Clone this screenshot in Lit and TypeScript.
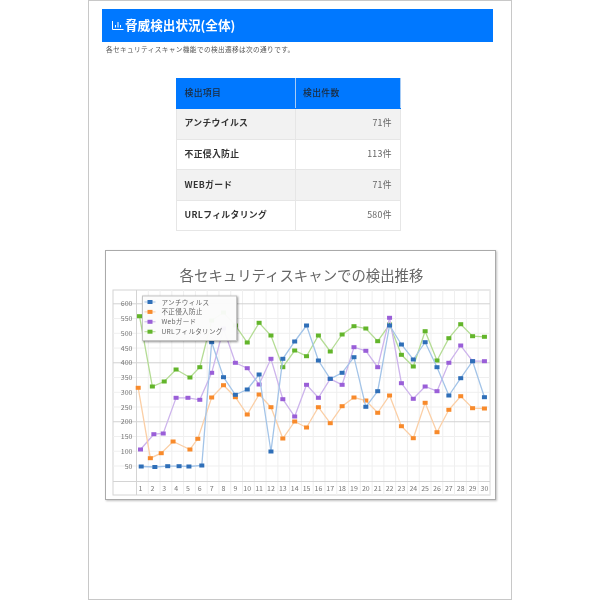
import { LitElement, html, css, svg } from "lit";
import { customElement } from "lit/decorators.js";

const xAt = (i: number) => 140 + i * 11.86;
const toPts = (ys: number[], dx: number[] = []) =>
  ys.map((y, i) => [xAt(i) + (dx[i] ?? 0), y] as [number, number]);

const series = [
  {
    name: "URLフィルタリング", line: "#b4dc94", mark: "#63b52b",
    pts: toPts([315.7, 386, 381, 369, 377, 366.7, 320, 312, 325, 342, 322.3, 335, 366.7, 350, 355.7, 335, 351, 334, 325.7, 328, 340.7, 324, 354.3, 366, 330.7, 360, 337.7, 323.7, 335.7, 336.3], [-1, 0, 0, 0, 2, 0]),
  },
  {
    name: "Webガード", line: "#cdb4ec", mark: "#9a5fd8",
    pts: toPts([449, 433.7, 433, 397.3, 397.3, 399.3, 372.3, 328, 362.3, 367.7, 384, 358.3, 398.7, 416, 384.3, 397.3, 378.3, 384.3, 346.7, 350.3, 366.7, 317.3, 382.7, 398.3, 386, 390.7, 362.3, 345, 360.7, 360.7], [0, 1.5, -1, 0, 0, 0]),
  },
  {
    name: "不正侵入防止", line: "#fbcfa6", mark: "#f88a2b",
    pts: toPts([387.3, 457.7, 452.7, 441, 449, 438.3, 397, 384.7, 396.7, 414, 394, 406.7, 438, 421, 427, 406.7, 422.7, 405.7, 397, 400, 412.3, 395, 425.7, 437.7, 402.3, 431.7, 409.3, 395.7, 407.7, 408], [-2.3, -2, -3, -3, 2, -2]),
  },
  {
    name: "アンチウィルス", line: "#a3c4e8", mark: "#2f6fb8",
    pts: toPts([466, 466.5, 465.7, 465.7, 466, 465, 341.7, 376.7, 394.3, 389, 374, 451, 358.3, 341, 325, 360, 378.3, 372.3, 356.7, 406.3, 390.7, 325, 344, 359, 341.7, 366.7, 395, 377.7, 360.7, 396.7], [0.7, 2.5, 3.5, 3, 1, 2]),
  },
];

const yFor = (v: number) => 465.5 - ((v - 50) * 162.2) / 550;
const ticks = [50, 100, 150, 200, 250, 300, 350, 400, 450, 500, 550, 600];
const rows = [
  ["アンチウイルス", "71件"],
  ["不正侵入防止", "113件"],
  ["WEBガード", "71件"],
  ["URLフィルタリング", "580件"],
];
const legend = [series[3], series[2], series[1], series[0]];

@customElement("app-root")
export class AppRoot extends LitElement {
  static styles = css`
    :host {
      display: block;
      font-family: "Noto Sans CJK JP", "Noto Sans", sans-serif;
    }
    .page {
      box-sizing: border-box;
      width: 424px;
      height: 600px;
      margin: 0 auto;
      border: 1px solid #c8c8c8;
      padding: 8px 18px 0 13px;
      display: flex;
      flex-direction: column;
      background: #fff;
      filter: blur(0.3px);
    }
    .head {
      box-sizing: border-box;
      height: 33px;
      background: #0078ff;
      color: #fff;
      display: flex;
      align-items: center;
      gap: 1px;
      padding: 0 0 1.5px 10px;
      font-size: 12.6px;
      font-weight: 700;
    }
    .head svg { width: 12px; height: 11px; flex: none; }
    .sub {
      margin: 2px 0 0 4px;
      font-size: 6.7px;
      line-height: 10px;
      color: #555;
      letter-spacing: 0.05em;
    }
    table {
      margin: 23.5px 0 0 74px;
      width: 225px;
      height: 153px;
      border-collapse: collapse;
      table-layout: fixed;
      font-size: 8.8px;
      letter-spacing: 0.04em;
    }
    th, td {
      box-sizing: border-box;
      border: 1px solid #e6e6e6;
      padding: 0 8px 2px 7.5px;
      color: #444;
      height: 30.6px;
    }
    th {
      background: #0078ff;
      border-color: #0078ff #a8ccf5 #0078ff #0078ff;
      text-align: left;
      font-weight: 500;
      color: #1c2a3a;
    }
    th.n { width: 105.5px; }
    td.k { font-weight: 700; color: #333; }
    td.v { text-align: right; color: #666; }
    tr.alt td { background: #f2f2f2; }
    .chart {
      box-sizing: border-box;
      margin: 19px 0 0 2.5px;
      width: 391px;
      height: 250px;
      border: 1px solid #aaa;
      box-shadow: 1px 1px 2px rgba(0, 0, 0, 0.25);
      background: #fff;
    }
    .chart svg { display: block; width: 389px; height: 248px; }
    .title { font-size: 14.4px; fill: #666; }
    .tick { font-size: 7px; fill: #777; }
    .leg { font-size: 6.6px; fill: #666; letter-spacing: 0.04em; }
  `;

  chart() {
    const L = 112.5, R = 489.5, T = 289.5, B = 494.5, AX = 136, SEP = 481;
    const vs = Array.from({ length: 30 }, (_, i) => AX + (i + 1) * 11.78);
    return svg`
      <svg viewBox="105.5 250.5 389 248" xmlns="http://www.w3.org/2000/svg">
        <defs>
          <filter id="ls" x="-10%" y="-10%" width="120%" height="125%">
            <feDropShadow dx="1" dy="1" stdDeviation="1" flood-color="#000" flood-opacity=".45"></feDropShadow>
          </filter>
        </defs>
        <text class="title" x="301" y="280" text-anchor="middle">各セキュリティスキャンでの検出推移</text>
        <rect x=${L} y=${T} width=${R - L} height=${B - T} fill="#fff" stroke="#d4d4d4"></rect>
        ${vs.map((x) => svg`<line x1=${x} x2=${x} y1=${T} y2=${B} stroke="#efefef"></line>`)}
        ${ticks.map((v) => svg`<line x1=${L} x2=${R} y1=${yFor(v)} y2=${yFor(v)} stroke=${v % 200 === 0 ? "#d2d2d2" : "#efefef"}></line>`)}
        <line x1=${L} x2=${R} y1=${SEP} y2=${SEP} stroke="#d4d4d4"></line>
        <line x1=${AX} x2=${AX} y1=${T} y2=${B} stroke="#d4d4d4"></line>
        ${ticks.map((v) => svg`<text class="tick" x="132" y=${yFor(v) + 2.5} text-anchor="end">${v}</text>`)}
        ${vs.map((_, i) => svg`<text class="tick" x=${xAt(i)} y="490.5" text-anchor="middle">${i + 1}</text>`)}
        ${series.map((s) => svg`
          <polyline fill="none" stroke=${s.line} stroke-width="1.3" points=${s.pts.map((p) => p.join(",")).join(" ")}></polyline>
          ${s.pts.map((p) => svg`<rect x=${p[0] - 2.5} y=${p[1] - 2} width="5" height="4" fill=${s.mark}></rect>`)}
        `)}
        <rect x="142" y="295.5" width="94" height="44.5" fill="#fff" fill-opacity=".93" stroke="#c4c4c4" filter="url(#ls)"></rect>
        ${legend.map((s, i) => {
          const y = 301.5 + i * 9.9;
          return svg`
            <line x1="144" x2="155" y1=${y} y2=${y} stroke=${s.line}></line>
            <rect x="147" y=${y - 2} width="5" height="4" fill=${s.mark}></rect>
            <text class="leg" x="161" y=${y + 2.5}>${s.name}</text>`;
        })}
      </svg>`;
  }

  render() {
    return html`
      <div class="page">
        <div class="head">
          <svg viewBox="0 0 12 11" fill="none" stroke="#fff" stroke-width="1">
            <path d="M.5 2v8.500h11M3.500 6v2.500M6 3v5.500M8.500 6v2.500"></path>
          </svg>
          <span>脅威検出状況(全体)</span>
        </div>
        <div class="sub">各セキュリティスキャン機能での検出遷移は次の通りです。</div>
        <table>
          <thead><tr><th>検出項目</th><th class="n">検出件数</th></tr></thead>
          <tbody>
            ${rows.map((r, i) => html`<tr class=${i % 2 === 0 ? "alt" : ""}><td class="k">${r[0]}</td><td class="v">${r[1]}</td></tr>`)}
          </tbody>
        </table>
        <div class="chart">${this.chart()}</div>
      </div>
    `;
  }
}
